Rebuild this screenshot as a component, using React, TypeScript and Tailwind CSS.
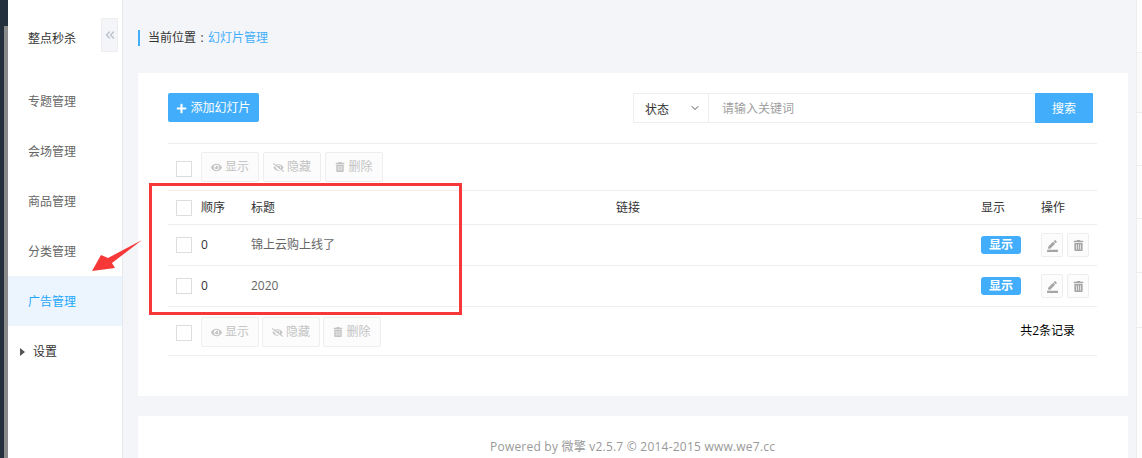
import { ChevronDown, ChevronsLeft } from 'lucide-react'
import { FaEye, FaEyeSlash, FaPlus, FaTrashAlt } from 'react-icons/fa'
import { MdBorderColor } from 'react-icons/md'

const FONT = "font-['Open_Sans','Noto_Sans_CJK_SC',sans-serif]"

const MENU = ['专题管理', '会场管理', '商品管理', '分类管理']

const ROWS = [
  { order: '0', title: '锦上云购上线了' },
  { order: '0', title: '2020' },
]

function Checkbox() {
  return <span className="block w-4 h-4 border border-[#dddddd] bg-white" />
}

function BatchButtons({ gap }: { gap: string }) {
  const items = [
    { label: '显示', icon: <FaEye size={11} /> },
    { label: '隐藏', icon: <FaEyeSlash size={11} /> },
    { label: '删除', icon: <FaTrashAlt size={10} /> },
  ]
  return (
    <div className={`flex ${gap}`}>
      {items.map(item => (
        <button
          key={item.label}
          className="h-[30px] w-[58px] flex items-center justify-center gap-[3px] rounded-[2px] border border-[#eeeeee] bg-[#fcfcfc] text-xs text-[#c4c4c4]"
        >
          {item.icon}
          {item.label}
        </button>
      ))}
    </div>
  )
}

function Row({ order, title }: { order: string; title: string }) {
  return (
    <div className="h-[41px] flex items-center border-b border-[#eeeeee] text-xs">
      <div className="w-[33px] pl-2">
        <Checkbox />
      </div>
      <div className="w-[50px] text-[#333333]">{order}</div>
      <div className="w-[730px] text-[#666666]">{title}</div>
      <div className="w-[60px]">
        <span className="w-10 h-[18px] flex items-center justify-center rounded-[3px] bg-[#42aefb] text-white font-bold">
          显示
        </span>
      </div>
      <div className="flex gap-1">
        <span className="w-[22px] h-[24px] flex items-center justify-center rounded-[2px] border border-[#eeeeee] bg-[#fcfcfc] text-[#a5a5a5]">
          <MdBorderColor size={13} />
        </span>
        <span className="w-[22px] h-[24px] flex items-center justify-center rounded-[2px] border border-[#eeeeee] bg-[#fcfcfc] text-[#a5a5a5]">
          <FaTrashAlt size={11} />
        </span>
      </div>
    </div>
  )
}

export default function App() {
  return (
    <div className={`${FONT} relative w-[1142px] h-[458px] overflow-hidden flex bg-[#f4f5f9]`}>
      {/* Left edge strip */}
      <div className="w-2 flex flex-col shrink-0">
        <div className="h-[26px] bg-[#25303e]" />
        <div className="flex-1 flex">
          <div className="w-1 bg-[#25303e]" />
          <div className="w-1 bg-[#8a8a8a]" />
        </div>
      </div>

      {/* Sidebar */}
      <aside className="w-[115px] shrink-0 bg-white border-r border-[#e8e9ed] text-xs relative">
        <div className="h-[76px] flex items-center pl-5 pt-[2px] text-[#333333]">整点秒杀</div>
        <button className="absolute left-[93px] top-[18px] w-[17px] h-[34px] flex items-center justify-center bg-[#f4f5f9] border border-[#eeeeee] text-[#bcc2cc]">
          <ChevronsLeft size={14} strokeWidth={2.5} />
        </button>
        <nav>
          {MENU.map(m => (
            <div key={m} className="h-[50px] flex items-center pl-5 pt-[2px] text-[#666666]">
              {m}
            </div>
          ))}
          <div className="h-[50px] flex items-center pl-5 pt-[2px] bg-[#ecf5fe] text-[#1ea7fd]">广告管理</div>
          <div className="h-[50px] flex items-center pl-3 pt-[2px] text-[#333333]">
            <span className="w-0 h-0 border-y-[4px] border-y-transparent border-l-[5px] border-l-[#555555] mr-2" />
            设置
          </div>
        </nav>
      </aside>

      {/* Main */}
      <main className="w-[1013px] shrink-0 pl-[15px]">
        <div className="h-[73px] pt-[30px]">
          <div className="h-4 pl-2 border-l-2 border-[#42aefb] flex items-center text-xs text-[#333333]">
            当前位置<span className="w-3 text-center">:</span>
            <span className="text-[#42aefb]">幻灯片管理</span>
          </div>
        </div>

        <section className="w-[990px] h-[323px] bg-white pl-[30px] pr-[31px] pt-5">
          <div className="flex justify-between items-start">
            <button className="w-[91px] h-[29px] flex items-center justify-center gap-[3px] pt-[1px] rounded-[2px] bg-[#42aefb] text-white text-xs">
              <FaPlus size={11} />
              添加幻灯片
            </button>
            <div className="flex h-[30px] pr-1 text-xs">
              <div className="w-[76px] flex items-center justify-between pl-[11px] pr-[7px] pt-[4px] border border-[#eeeeee] text-[#333333]">
                状态
                <ChevronDown size={12} className="text-[#555555] -mt-[5px]" />
              </div>
              <div className="w-[326px] flex items-center pl-[13px] pt-[2px] border-y border-[#eeeeee] text-[#a0a0a0]">
                请输入关键词
              </div>
              <button className="w-[58px] pt-[2px] rounded-[1px] bg-[#42aefb] text-white">搜索</button>
            </div>
          </div>

          <div className="mt-[20px] h-[47px] border-t border-[#eeeeee] flex items-start pt-2">
            <div className="w-[33px] pl-2 pt-[9px]">
              <Checkbox />
            </div>
            <BatchButtons gap="gap-1" />
          </div>

          <div className="h-[35px] flex items-center border-y border-[#eeeeee] text-xs text-[#333333]">
            <div className="w-[33px] pl-2">
              <Checkbox />
            </div>
            <div className="w-[50px]">顺序</div>
            <div className="w-[365px]">标题</div>
            <div className="w-[365px]">链接</div>
            <div className="w-[60px]">显示</div>
            <div>操作</div>
          </div>

          {ROWS.map((r, i) => (
            <Row key={i} {...r} />
          ))}

          <div className="h-[49px] flex items-start pt-[10px] border-b border-[#eeeeee]">
            <div className="w-[33px] pl-2 pt-2">
              <Checkbox />
            </div>
            <BatchButtons gap="gap-[3px]" />
            <span className="ml-auto mr-[22px] mt-[6px] text-xs text-black">共2条记录</span>
          </div>
        </section>

        <footer className="mt-5 w-[990px] h-[60px] bg-white pt-[23px] pl-[352px] text-xs text-[#999999] whitespace-nowrap tracking-[0.22px]">
          Powered by 微擎 v2.5.7 © 2014-2015 www.we7.cc
        </footer>
      </main>

      {/* Cut-off panel at the right edge */}
      <div className="flex-1 bg-[#fdfdfd] border-l border-[#eeeeee] pt-[52px]">
        <div className="h-[61px] bg-[#fafafa] border-y border-[#eeeeee]" />
        <div className="h-[53px] border-b border-[#eeeeee]" />
        <div className="h-[53px] border-b border-[#eeeeee]" />
        <div className="h-[54px] border-b border-[#eeeeee]" />
        <div className="h-[55px] border-b border-[#eeeeee]" />
      </div>

      {/* Annotation: red box */}
      <div className="absolute left-[149px] top-[183px] w-[313px] h-[132px] border-[3px] border-[#f73838]" />

      {/* Annotation: red arrow */}
      <svg className="absolute left-[88px] top-[238px]" width="56" height="38" viewBox="0 0 56 38">
        <path d="M54 2 L20 20 L13 17 L4 33 L27 30 L24 25 Z" fill="#f73838" />
      </svg>
    </div>
  )
}
